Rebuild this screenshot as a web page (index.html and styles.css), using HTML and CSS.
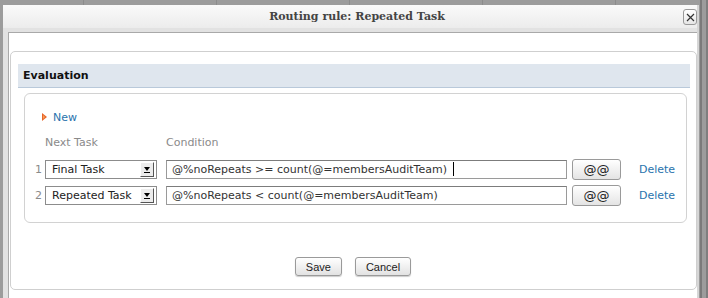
FILE: index.html
```html
<!DOCTYPE html>
<html>
<head>
<meta charset="utf-8">
<title>Routing rule</title>
<link rel="stylesheet" href="styles.css">
</head>
<body>
<div class="page">
  <div class="dialog">
    <div class="titlebar">
      <span class="title">Routing rule: Repeated Task</span>
      <button class="close" aria-label="Close">
        <svg width="9" height="9" viewBox="0 0 9 9"><path d="M1 1L8 8M8 1L1 8" stroke="#333" stroke-width="1.2"/></svg>
      </button>
    </div>
    <div class="content">
      <div class="panel">
        <div class="section-head">Evaluation</div>
        <div class="box">
          <a class="new" href="#"><svg class="new-icon" width="5" height="8" viewBox="0 0 5 8"><path d="M0 0L5 4L0 8Z" fill="#e8662a"/><path d="M1 2L3 4L1 6Z" fill="#f6a05a"/></svg>New</a>
          <div class="headers">
            <span class="h-task">Next Task</span>
            <span class="h-cond">Condition</span>
          </div>
          <div class="row">
            <span class="num">1</span>
            <div class="select"><span class="sel-text">Final Task</span><span class="sel-arrow"><i class="tri"></i></span></div>
            <div class="input">@%noRepeats &gt;= count(@=membersAuditTeam) <span class="caret"></span></div>
            <button class="atbtn">@@</button>
            <a class="del" href="#">Delete</a>
          </div>
          <div class="row">
            <span class="num">2</span>
            <div class="select"><span class="sel-text">Repeated Task</span><span class="sel-arrow"><i class="tri"></i></span></div>
            <div class="input">@%noRepeats &lt; count(@=membersAuditTeam)</div>
            <button class="atbtn">@@</button>
            <a class="del" href="#">Delete</a>
          </div>
        </div>
        <div class="actions">
          <button class="btn">Save</button>
          <button class="btn">Cancel</button>
        </div>
      </div>
    </div>
  </div>
</div>
</body>
</html>
```
FILE: styles.css
```css
html, body {
  margin: 0;
  padding: 0;
}
body {
  width: 708px;
  height: 298px;
  overflow: hidden;
  background: #9c9c9c;
  font-family: "DejaVu Sans", sans-serif;
  font-size: 11px;
  color: #333;
}
.page {
  height: 298px;
  padding: 5px 0 0 3px;
  box-sizing: border-box;
  background:
    linear-gradient(to right, transparent 0 700px, #7a7a7a 700px 702px, transparent 702px 706px, #7e7e7e 706px 708px),
    repeating-linear-gradient(to right, transparent 0 83px, #8c8c8c 83px 84px, transparent 84px 133px);
}
.dialog {
  width: 696px;
  height: 300px;
  background: #e2e2e2;
  border-right: 2px solid #d6d6d6;
  box-sizing: border-box;
}
.titlebar {
  height: 23px;
  background: linear-gradient(#fafafa, #ececec);
  display: flex;
  align-items: center;
  justify-content: center;
  position: relative;
}
.title {
  font-family: "DejaVu Serif", serif;
  font-weight: bold;
  font-size: 11px;
  color: #444;
  margin-left: 14px;
}
.close {
  position: absolute;
  right: 0px;
  top: 4px;
  width: 14px;
  height: 16px;
  padding: 0;
  border: 1px solid #999;
  border-radius: 3px;
  background: linear-gradient(#ffffff, #e6e6e6);
  display: flex;
  align-items: center;
  justify-content: center;
}
.content {
  margin: 4px 0 0 5px;
  background: #fff;
  border-top: 1px solid #a9a9a9;
  border-left: 1px solid #a9a9a9;
  height: 280px;
  padding: 18px 0 0 1px;
  box-sizing: border-box;
}
.panel {
  border: 1px solid #cfcfcf;
  border-radius: 5px;
  height: 239px;
  box-sizing: border-box;
  padding: 12px 6px 0 7px;
}
.section-head {
  height: 24px;
  background: #dfe6ee;
  border-bottom: 1px solid #b9c9da;
  box-sizing: border-box;
  font-weight: bold;
  color: #111;
  padding: 3px 0 0 5px;
  line-height: 17px;
}
.box {
  margin: 5px 3px 0 6px;
  height: 130px;
  border: 1px solid #d2d2d2;
  border-radius: 6px;
  box-sizing: border-box;
  padding: 16px 0 0 10px;
}
.new {
  display: flex;
  align-items: center;
  color: #2a73ad;
  text-decoration: none;
  margin-left: 7px;
  height: 14px;
}
.new-icon {
  margin-right: 6px;
}
.headers {
  display: flex;
  color: #8a8a8a;
  margin-top: 12px;
  height: 14px;
  line-height: 14px;
  padding-left: 10px;
}
.h-task {
  width: 121px;
}
.row {
  display: flex;
  align-items: center;
  height: 22px;
  margin-top: 4px;
}
.headers + .row {
  margin-top: 8px;
}
.num {
  width: 10px;
  color: #8a8a8a;
  text-align: left;
}
.select {
  width: 112px;
  height: 19px;
  box-sizing: border-box;
  border: 1px solid #8c8c8c;
  background: #fff;
  display: flex;
  align-items: center;
  justify-content: space-between;
  padding: 0 2px 0 6px;
  color: #222;
}
.sel-arrow {
  width: 14px;
  height: 15px;
  box-sizing: border-box;
  background: #ececec;
  border: 1px solid;
  border-color: #fff #555 #555 #fff;
  display: flex;
  align-items: center;
  justify-content: center;
  flex-direction: column;
}
.tri {
  display: block;
  width: 0;
  height: 0;
  border-left: 3px solid transparent;
  border-right: 3px solid transparent;
  border-top: 4px solid #000;
  margin-bottom: 1px;
}
.tri::after {
  content: "";
  display: block;
  width: 6px;
  height: 1px;
  background: #000;
  margin: 1px 0 0 -3px;
}
.input {
  margin-left: 9px;
  width: 401px;
  height: 19px;
  box-sizing: border-box;
  border: 1px solid #9a9a9a;
  border-top-color: #7c7c7c;
  padding: 0 5px;
  line-height: 17px;
  color: #333;
  white-space: nowrap;
  display: flex;
  align-items: center;
}
.caret {
  display: inline-block;
  width: 1px;
  height: 14px;
  background: #000;
  margin-left: 6px;
}
.atbtn {
  margin-left: 5px;
  width: 49px;
  height: 21px;
  border: 1px solid #9a9a9a;
  border-radius: 3px;
  background: linear-gradient(#ffffff, #e4e4e4);
  font-family: "DejaVu Sans", sans-serif;
  font-size: 13px;
  color: #222;
  padding: 0;
}
.del {
  margin-left: 18px;
  color: #2a73ad;
  text-decoration: none;
}
.actions {
  display: flex;
  justify-content: center;
  gap: 13px;
  margin-top: 34px;
  padding-right: 2px;
}
.btn {
  height: 19px;
  padding: 0 10px;
  border: 1px solid #9a9a9a;
  border-radius: 3px;
  background: linear-gradient(#ffffff, #e2e2e2);
  box-shadow: 0 1px 1px rgba(0,0,0,0.2);
  font-family: "Liberation Sans", sans-serif;
  font-size: 11px;
  color: #222;
}
```
